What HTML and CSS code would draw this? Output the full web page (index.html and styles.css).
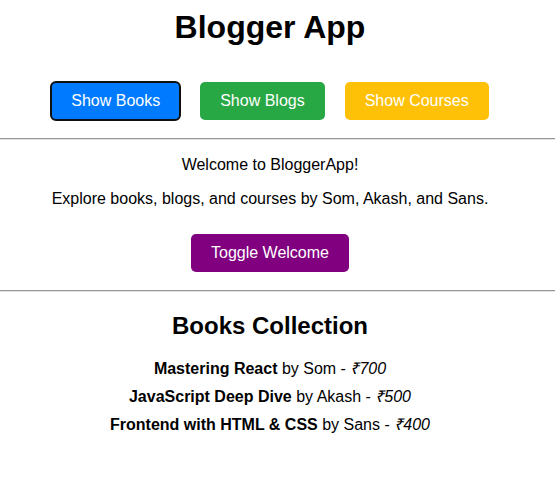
FILE: index.html
```html
<!DOCTYPE html>
<html lang="en">
<head>
<meta charset="utf-8">
<title>Blogger App</title>
<link rel="stylesheet" href="styles.css">
</head>
<body>
<div class="app">
  <h1 class="title">Blogger App</h1>
  <div class="nav">
    <button class="btn btn-blue is-active">Show Books</button>
    <button class="btn btn-green">Show Blogs</button>
    <button class="btn btn-yellow">Show Courses</button>
  </div>
  <hr class="divider">
  <p class="text">Welcome to BloggerApp!</p>
  <p class="text">Explore books, blogs, and courses by Som, Akash, and Sans.</p>
  <div class="toggle-row">
    <button class="btn btn-purple">Toggle Welcome</button>
  </div>
  <hr class="divider">
  <h2 class="section-title">Books Collection</h2>
  <div class="item"><strong>Mastering React</strong> by Som - <em>₹700</em></div>
  <div class="item"><strong>JavaScript Deep Dive</strong> by Akash - <em>₹500</em></div>
  <div class="item"><strong>Frontend with HTML &amp; CSS</strong> by Sans - <em>₹400</em></div>
</div>
</body>
</html>
```
FILE: styles.css
```css
body {
  margin: 0;
  background: #fff;
  color: #000;
  font-family: "Liberation Sans", Arial, sans-serif;
  font-size: 16px;
}

.app {
  text-align: center;
  padding-right: 15px;
}

.title {
  margin: 9px 0 26px;
  font-size: 32px;
  line-height: 37px;
  font-weight: bold;
}

.nav {
  display: flex;
  justify-content: center;
}

.btn {
  margin: 10px;
  padding: 10px 20px;
  border: none;
  border-radius: 5px;
  color: #fff;
  font-family: "Liberation Sans", Arial, sans-serif;
  font-size: 16px;
  line-height: 18px;
  cursor: pointer;
}

.btn-blue { background: #007bff; }
.btn-green { background: #28a745; }
.btn-yellow { background: #ffc107; }
.btn-purple { background: #800080; }

.is-active {
  outline: 2px solid #101010;
  outline-offset: -1px;
}

.divider {
  margin: 8px -15px 8px 0;
  border: none;
  border-top: 1px solid #9a9a9a;
  border-bottom: 1px solid #e0e0e0;
  height: 0;
}

.text {
  margin: 16px 0;
  line-height: 18px;
}

.toggle-row {
  display: flex;
  justify-content: center;
}

.section-title {
  margin: 20px 0;
  font-size: 24px;
  line-height: 28px;
  font-weight: bold;
}

.item {
  margin: 10px 0;
  line-height: 18px;
}
```
